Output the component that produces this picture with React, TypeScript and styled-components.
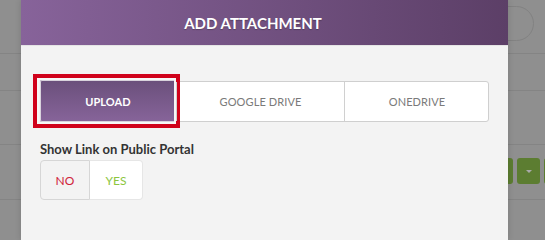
import styled, { createGlobalStyle } from "styled-components";

const GlobalStyle = createGlobalStyle`
  html, body {
    margin: 0;
    padding: 0;
    height: 100%;
    background: #8f8f8f;
    font-family: Lato, "Open Sans", Arial, sans-serif;
    overflow: hidden;
  }
  * { box-sizing: border-box; }
`;

const Page = styled.div`
  position: relative;
  width: 100%;
  height: 100vh;
  min-height: 208px;
  overflow: hidden;
  display: flex;
  flex-direction: column;
`;

const BgRow = styled.div<{ $h: number }>`
  height: ${(p) => p.$h}px;
  flex: none;
  border-bottom: 1px solid #848484;
  display: flex;
  align-items: center;
  gap: 4px;
`;

const Pill = styled.div`
  margin-left: 474px;
  width: 60px;
  height: 35px;
  margin-top: -6px;
  border-radius: 18px;
  border: 1px solid #828282;
`;

const GreenBtn = styled.div`
  width: 23px;
  height: 26px;
  flex: none;
  border-radius: 3px;
  background: #5c7d31;
  display: flex;
  align-items: center;
  justify-content: center;
`;

const BtnRow = styled(BgRow)`
  padding-left: 490px;
  margin-top: -2px;
`;

const Caret = styled.span`
  width: 0;
  height: 0;
  border-left: 3px solid transparent;
  border-right: 3px solid transparent;
  border-top: 3px solid #a9a9a9;
`;

const Modal = styled.div`
  position: absolute;
  top: 0;
  bottom: 0;
  left: 21px;
  width: 487px;
  background: #f3f3f3;
  box-shadow: 0 0 6px rgba(0, 0, 0, 0.15);
`;

const Header = styled.div`
  height: 46px;
  background: linear-gradient(90deg, #87639a 0%, #5c3f67 100%);
  border-bottom: 1px solid #e4e4e4;
  display: flex;
  align-items: center;
  justify-content: center;
  padding-right: 23px;
  padding-top: 1px;
  color: #fff;
  font-weight: 700;
  font-size: 15px;
  text-shadow: 0 1px 1px rgba(0, 0, 0, 0.25);
`;

const Body = styled.div`
  padding: 35px 19px 0 19px;
`;

const SourceGroup = styled.div`
  display: flex;
  height: 41px;
  background: #fff;
  border: 1px solid #cfcfcf;
  border-radius: 3px;
`;

const SourceTab = styled.div<{ $w: number; $active?: boolean }>`
  position: relative;
  width: ${(p) => p.$w}px;
  flex: none;
  display: flex;
  align-items: center;
  justify-content: center;
  font-size: 11px;
  letter-spacing: 0.1px;
  color: ${(p) => (p.$active ? "#fff" : "#7a7a7a")};
  font-weight: ${(p) => (p.$active ? 700 : 400)};
  background: ${(p) =>
    p.$active ? "linear-gradient(180deg, #6a4f7b 0%, #87649a 100%)" : "transparent"};
  border-left: ${(p) => (p.$active ? "none" : "1px solid #d0d0d0")};
  margin: ${(p) => (p.$active ? "-2px 0 -1px -1px" : "0")};
  box-shadow: ${(p) => (p.$active ? "inset 0 0 0 1px #d8d2dc" : "none")};
  border-radius: ${(p) => (p.$active ? "2px" : "0")};
`;

const Highlight = styled.div`
  position: absolute;
  top: -6px;
  left: -7px;
  right: -4px;
  bottom: -6px;
  border: 4px solid #d0021b;
  box-shadow: inset 0 0 0 2px #f7f7f7;
  pointer-events: none;
`;

const Label = styled.div`
  margin-top: 19px;
  font-size: 13px;
  font-weight: 700;
  color: #333;
  line-height: 16px;
`;

const Toggle = styled.div`
  display: flex;
  margin-top: 3px;
  height: 40px;
  width: 103px;
`;

const ToggleOpt = styled.div<{ $on?: boolean; $tone: string }>`
  flex: ${(p) => (p.$on ? "0 0 53px" : "0 0 50px")};
  display: flex;
  align-items: center;
  justify-content: center;
  font-size: 12px;
  color: ${(p) => p.$tone};
  background: ${(p) => (p.$on ? "#fff" : "#f3f3f3")};
  border: 1px solid ${(p) => (p.$on ? "#e6e6e6" : "#d6d6d6")};
  border-radius: ${(p) => (p.$on ? "0 4px 4px 0" : "4px 0 0 4px")};
  ${(p) => (p.$on ? "border-left: none;" : "")}
`;

const App = () => {
  const sources = [
    { name: "UPLOAD", width: 136, active: true },
    { name: "GOOGLE DRIVE", width: 168 },
    { name: "ONEDRIVE", width: 145 },
  ];

  return (
    <>
      <GlobalStyle />
      <Page>
        <BgRow $h={54}>
          <Pill />
        </BgRow>
        <BgRow $h={37} />
        <BgRow $h={54} />
        <BtnRow $h={57}>
          <GreenBtn />
          <GreenBtn>
            <Caret />
          </GreenBtn>
          <GreenBtn />
        </BtnRow>
        <BgRow $h={60} />

        <Modal>
          <Header>ADD ATTACHMENT</Header>
          <Body>
            <SourceGroup>
              {sources.map((s) => (
                <SourceTab key={s.name} $w={s.width} $active={s.active}>
                  {s.name}
                  {s.active && <Highlight />}
                </SourceTab>
              ))}
            </SourceGroup>
            <Label>Show Link on Public Portal</Label>
            <Toggle>
              <ToggleOpt $tone="#d0233a">NO</ToggleOpt>
              <ToggleOpt $on $tone="#8cc63e">
                YES
              </ToggleOpt>
            </Toggle>
          </Body>
        </Modal>
      </Page>
    </>
  );
};

export default App;
